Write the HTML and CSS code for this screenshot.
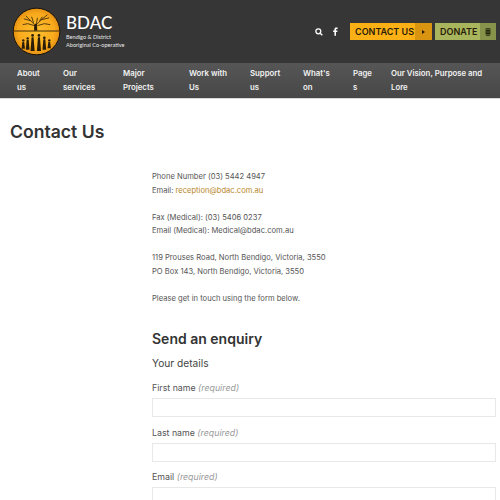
FILE: index.html
```html
<!DOCTYPE html>
<html lang="en">
<head>
  <meta charset="UTF-8" />
  <meta name="viewport" content="width=device-width, initial-scale=1.0" />
  <title>Contact Us - BDAC</title>
  <link rel="stylesheet" href="styles.css">
</head>
<body>
  <header class="top-bar">
    <a class="brand" href="#">
      <svg class="brand-logo" viewBox="0 0 50 50" width="49" height="49">
        <defs>
          <radialGradient id="sun" cx="50%" cy="50%" r="55%">
            <stop offset="0%" stop-color="#fdc02f" />
            <stop offset="70%" stop-color="#f8a91c" />
            <stop offset="100%" stop-color="#dc8410" />
          </radialGradient>
        </defs>
        <circle cx="25" cy="25" r="23.8" fill="url(#sun)" stroke="#17120a" stroke-width="1" />
        <path d="M1.5 24.5h47" stroke="#2a1c08" stroke-width="0.9" />
        <path d="M23 24v-6l-4-4-7-2M23 19l-7-2-5 1M25 24v-7l1-6M25 18l5-5 8-2M26 19l7-2 6 1M22 16l-2-6M28 14l3-4M19 14l-5-5M30 13l6-5" fill="none" stroke="#2a1c08" stroke-width="0.8" />
        <path d="M22.8 24h3l-.4-7h-2.2z" fill="#2a1c08" />
        <g fill="#2a1c08">
          <circle cx="11.5" cy="34" r="1.2" /><path d="M10.6 35.5h1.8l.8 7h-3.4z" />
          <circle cx="16" cy="32" r="1.2" /><path d="M15 33.5h2l.9 10h-3.8z" />
          <circle cx="21" cy="29" r="1.4" /><path d="M20 30.8h2l1.1 14.2h-4.2z" />
          <circle cx="27.5" cy="29" r="1.4" /><path d="M26.5 30.8h2l1.1 14.2h-4.2z" />
          <circle cx="33" cy="31.5" r="1.3" /><path d="M32 33h2l.9 10.5h-3.8z" />
          <circle cx="38" cy="34" r="1.2" /><path d="M37.1 35.5h1.8l.8 6.5h-3.4z" />
        </g>
      </svg>
      <span class="brand-text">
        <span class="brand-name">BDAC</span>
        <span class="brand-sub">Bendigo &amp; District</span>
        <span class="brand-sub">Aboriginal Co-operative</span>
      </span>
    </a>
    <div class="top-actions">
      <svg class="icon-search" viewBox="0 0 12 12" width="8" height="8">
        <circle cx="5" cy="5" r="3.7" fill="none" stroke="#fff" stroke-width="1.9" />
        <path d="M7.8 7.8l3.2 3.2" stroke="#fff" stroke-width="2.1" />
      </svg>
      <svg class="icon-fb" viewBox="0 0 6 10" width="5" height="9">
        <path d="M1.7 10V5.6H.2V3.9h1.5V2.6C1.7 1 2.6.2 4 .2h1.5v1.7h-1c-.7 0-.9.4-.9.9v1.1h1.8l-.3 1.7H3.6V10z" fill="#fff" />
      </svg>
      <a class="btn btn-contact" href="#">
        <span class="btn-label">CONTACT US</span>
        <span class="btn-icon"><i class="arrow"></i></span>
      </a>
      <a class="btn btn-donate" href="#">
        <span class="btn-label">DONATE</span>
        <span class="btn-icon">
          <svg viewBox="0 0 8 10" width="6" height="8">
            <path d="M1 0h6l.4 1.6H.6zM.6 2.2h6.8v2.6H.6zM.6 5.4h6.8V8H.6zM1 8.6h6L6.6 10H1.4z" fill="#26280f" />
          </svg>
        </span>
      </a>
    </div>
  </header>

  <nav class="main-nav">
    <a href="#">About us</a>
    <a href="#">Our services</a>
    <a href="#">Major Projects</a>
    <a href="#">Work with Us</a>
    <a href="#">Support us</a>
    <a href="#">What's on</a>
    <a href="#" class="nav-break">Pages</a>
    <a href="#" class="nav-last">Our Vision, Purpose and Lore</a>
  </nav>

  <main class="content">
    <h1 class="page-title">Contact Us</h1>
    <div class="body-col">
      <p>Phone Number (03) 5442 4947<br>Email: <a href="#">reception@bdac.com.au</a></p>
      <p>Fax (Medical): (03) 5406 0237<br>Email (Medical): Medical@bdac.com.au</p>
      <p>119 Prouses Road, North Bendigo, Victoria, 3550<br>PO Box 143, North Bendigo, Victoria, 3550</p>
      <p>Please get in touch using the form below.</p>

      <h2 class="form-title">Send an enquiry</h2>
      <form class="enquiry">
        <h3 class="form-sub">Your details</h3>
        <label class="field">
          <span class="field-label">First name <em>(required)</em></span>
          <input type="text" />
        </label>
        <label class="field">
          <span class="field-label">Last name <em>(required)</em></span>
          <input type="text" />
        </label>
        <label class="field">
          <span class="field-label">Email <em>(required)</em></span>
          <input type="email" />
        </label>
      </form>
    </div>
  </main>
</body>
</html>
```

FILE: styles.css
```css
/* Reset & Base */
* {
  margin: 0;
  padding: 0;
  box-sizing: border-box;
}

html, body {
  height: 500px;
  overflow: hidden;
}

body {
  font-family: 'Inter', 'Liberation Sans', sans-serif;
  background: #fff;
  color: #555;
}

a {
  text-decoration: none;
}

/* Top bar */
.top-bar {
  height: 63px;
  background: #363636;
  display: flex;
  justify-content: space-between;
  align-items: center;
  padding: 0 4px 0 12px;
}

.brand {
  display: flex;
  align-items: center;
  gap: 5px;
  color: #fff;
}

.brand-text {
  display: flex;
  flex-direction: column;
}

.brand-name {
  font-family: 'Lato', sans-serif;
  font-size: 17px;
  line-height: 18px;
  font-weight: 500;
  margin-bottom: 1px;
}

.brand-sub {
  font-family: 'Lato', sans-serif;
  font-size: 5.6px;
  line-height: 8px;
  color: #e6e6e6;
}

.top-actions {
  display: flex;
  align-items: center;
}

.icon-search {
  margin-right: 10px;
}

.icon-fb {
  margin-right: 12px;
}

/* Buttons */
.btn {
  display: flex;
  height: 17px;
  font-size: 9px;
  font-weight: 600;
  color: #2a1c08;
  white-space: nowrap;
}

.btn-label {
  display: flex;
  align-items: center;
}

.btn-icon {
  display: flex;
  align-items: center;
  justify-content: center;
}

.btn-contact {
  background: #fbb015;
  margin-right: 3px;
}

.btn-contact .btn-label {
  width: 65px;
  padding-left: 5px;
}

.btn-contact .btn-icon {
  width: 17px;
  background: #d99410;
}

.arrow {
  border-left: 3px solid #2a1c08;
  border-top: 2px solid transparent;
  border-bottom: 2px solid transparent;
}

.btn-donate {
  background: #a9b55c;
}

.btn-donate .btn-label {
  width: 45px;
  padding-left: 5px;
}

.btn-donate .btn-icon {
  width: 16px;
  background: #87934a;
}

/* Main nav */
.main-nav {
  height: 36px;
  background: linear-gradient(#565656, #474747);
  border-bottom: 1px solid #d8d8d8;
  display: grid;
  grid-template-columns: 46px 60px 66px 61px 53px 50px 38px 1fr;
  padding: 0 17px;
  align-items: center;
}

.main-nav a {
  padding-right: 17px;
  color: #f2f2f2;
  font-size: 7.8px;
  line-height: 13.5px;
  font-weight: 600;
}

.main-nav .nav-break {
  padding-right: 0;
  width: 20px;
  word-break: break-all;
}

.main-nav .nav-last {
  padding-right: 0;
}

/* Content */
.content {
  padding: 24px 0 0 10px;
}

.page-title {
  font-size: 17.6px;
  line-height: 18px;
  font-weight: 600;
  color: #333;
  margin-bottom: 29px;
}

.body-col {
  margin-left: 142px;
  width: 344px;
  font-size: 7.6px;
  line-height: 13.5px;
}

.body-col p {
  margin-bottom: 13.5px;
}

.body-col p a {
  color: #b8862b;
}

.form-title {
  margin-top: 25px;
  font-size: 14px;
  line-height: 18px;
  font-weight: 600;
  color: #333;
}

.form-sub {
  margin: 8px 0 11px;
  font-size: 10.2px;
  line-height: 14px;
  font-weight: 400;
  color: #444;
}

.field {
  display: block;
  margin-top: 8.5px;
}

.field-label {
  display: block;
  font-size: 8.8px;
  line-height: 14px;
  margin-bottom: 3px;
}

.field-label em {
  color: #999;
}

.field input {
  display: block;
  width: 100%;
  height: 19px;
  border: 1px solid #e8e8e8;
  background: #fff;
}
```
